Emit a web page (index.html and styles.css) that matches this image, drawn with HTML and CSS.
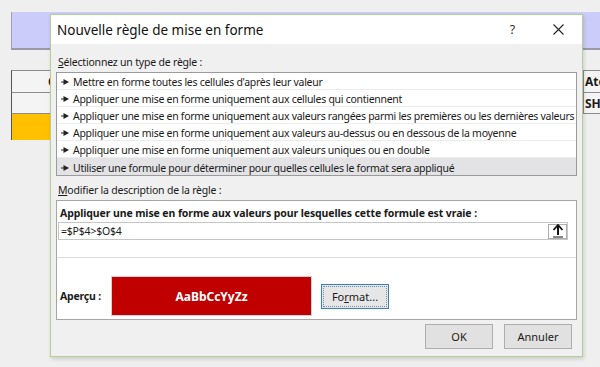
FILE: index.html
```html
<!DOCTYPE html>
<html lang="fr">
<head>
<meta charset="utf-8">
<title>Nouvelle règle de mise en forme</title>
<link rel="stylesheet" href="styles.css">
</head>
<body>
<div class="sheet">
  <div class="band"></div>
  <div class="grid">
    <div class="c edge"></div><div class="c hd">C</div><div class="c mid"></div><div class="c r">Ate</div>
    <div class="c edge"></div><div class="c"></div><div class="c mid"></div><div class="c r">SH:</div>
    <div class="c edge"></div><div class="c yellow"></div><div class="c mid"></div><div class="c blank"></div>
  </div>
</div>

<div class="dialog">
  <div class="titlebar">
    <span class="title">Nouvelle règle de mise en forme</span>
    <span class="help">?</span>
    <svg class="close" width="11" height="11" viewBox="0 0 11 11"><path d="M0.5 0.5 L10.5 10.5 M10.5 0.5 L0.5 10.5" stroke="#222" stroke-width="1.1" fill="none"/></svg>
  </div>
  <div class="body">
    <div class="label"><u>S</u>électionnez un type de règle :</div>
    <ul class="list">
      <li><svg class="arr" width="8" height="6" viewBox="0 0 8 6"><path d="M0 3 H3" stroke="#222" stroke-width="1"/><path d="M2.5 0 L8 3 L2.5 6 Z" fill="#222"/></svg>Mettre en forme toutes les cellules d'après leur valeur</li>
      <li><svg class="arr" width="8" height="6" viewBox="0 0 8 6"><path d="M0 3 H3" stroke="#222" stroke-width="1"/><path d="M2.5 0 L8 3 L2.5 6 Z" fill="#222"/></svg>Appliquer une mise en forme uniquement aux cellules qui contiennent</li>
      <li><svg class="arr" width="8" height="6" viewBox="0 0 8 6"><path d="M0 3 H3" stroke="#222" stroke-width="1"/><path d="M2.5 0 L8 3 L2.5 6 Z" fill="#222"/></svg>Appliquer une mise en forme uniquement aux valeurs rangées parmi les premières ou les dernières valeurs</li>
      <li><svg class="arr" width="8" height="6" viewBox="0 0 8 6"><path d="M0 3 H3" stroke="#222" stroke-width="1"/><path d="M2.5 0 L8 3 L2.5 6 Z" fill="#222"/></svg>Appliquer une mise en forme uniquement aux valeurs au-dessus ou en dessous de la moyenne</li>
      <li><svg class="arr" width="8" height="6" viewBox="0 0 8 6"><path d="M0 3 H3" stroke="#222" stroke-width="1"/><path d="M2.5 0 L8 3 L2.5 6 Z" fill="#222"/></svg>Appliquer une mise en forme uniquement aux valeurs uniques ou en double</li>
      <li class="sel"><svg class="arr" width="8" height="6" viewBox="0 0 8 6"><path d="M0 3 H3" stroke="#222" stroke-width="1"/><path d="M2.5 0 L8 3 L2.5 6 Z" fill="#222"/></svg>Utiliser une formule pour déterminer pour quelles cellules le format sera appliqué</li>
    </ul>
    <div class="label label2"><u>M</u>odifier la description de la règle :</div>
    <div class="desc">
      <div class="desc-title">Appliquer une mise en forme aux valeurs pour lesquelles cette formule est vraie :</div>
      <div class="input">
        <span class="formula">=$P$4&gt;$O$4</span>
        <span class="ref"><svg width="12" height="14" viewBox="0 0 12 14"><path d="M6 2 V11" stroke="#111" stroke-width="2"/><path d="M1.5 6 L6 1 L10.5 6" stroke="#111" stroke-width="1.8" fill="none"/><path d="M1 13 H11" stroke="#111" stroke-width="1"/></svg></span>
      </div>
      <div class="sep"></div>
      <div class="preview-row">
        <span class="apercu">Aperçu :</span>
        <div class="preview">AaBbCcYyZz</div>
        <button class="btn format">Fo<u>r</u>mat...</button>
      </div>
    </div>
    <div class="actions">
      <button class="btn">OK</button>
      <button class="btn">Annuler</button>
    </div>
  </div>
</div>
</body>
</html>
```

FILE: styles.css
```css
* { box-sizing: border-box; }
html, body { margin: 0; padding: 0; }
body {
  width: 600px;
  height: 367px;
  overflow: hidden;
  background: #efefef;
  font-family: "Noto Sans", "Open Sans", sans-serif;
  font-size: 10.5px;
  letter-spacing: -0.2px;
  color: #1a1a1a;
  position: relative;
}
.sheet { padding-top: 12px; }
.band {
  margin-left: 11px;
  height: 38px;
  background: #ccccfa;
  border-left: 1px solid #a0a0b0;
  border-bottom: 2px solid #9a9aa6;
}
.grid {
  margin-top: 20px;
  display: grid;
  grid-template-columns: 11px 39px 533px 17px;
  grid-template-rows: 22px 21px 27px;
}
.c {
  border-top: 1px solid #8c8c8c;
  background: #f4f4f4;
  font-weight: bold;
  font-size: 12px;
  letter-spacing: 0;
  display: flex;
  align-items: center;
  white-space: nowrap;
}
.edge { border-top: none; background: #efefef; }
.mid { background: #f4f4f4; }
.grid .c:nth-child(2), .grid .c:nth-child(6), .grid .c:nth-child(10) { border-left: 1px solid #555; }
.hd { padding-left: 36px; }
.r { border-left: 1px solid #8c8c8c; padding-left: 1px; overflow: hidden; }
.yellow { background: #ffc000; }
.blank { border-top: 1px solid #8c8c8c; background: #efefef; border-left: none; }

.dialog {
  position: absolute;
  left: 50px;
  top: 14px;
  width: 533px;
  height: 343px;
  background: #f0f0f0;
  border: 1px solid #b3cf91;
  box-shadow: 1px 2px 4px rgba(0,0,0,0.15);
}
.titlebar {
  height: 29px;
  background: #fff;
  display: flex;
  align-items: center;
  padding-left: 6px;
}
.title { font-size: 13.5px; letter-spacing: 0; color: #111; flex: 1; }
.help { font-size: 12.5px; color: #333; margin-right: 38px; }
.close { margin-right: 18px; }

.body { padding: 0 5px; }
.label { height: 16px; line-height: 16px; margin-top: 10px; margin-bottom: 2px; padding-left: 2px; }
.label2 { margin-top: 6px; }

.list {
  list-style: none;
  margin: 0;
  padding: 0;
  height: 104px;
  background: #fff;
  border: 1px solid #9b9b9b;
}
.list li {
  height: 17px;
  display: flex;
  align-items: center;
  border-bottom: 1px solid #ececec;
  white-space: nowrap;
  padding-left: 4px;
  padding-top: 2px;
  letter-spacing: -0.28px;
}
.list li:last-child { border-bottom: none; }
.list li.sel { background: #e3e3e6; }
.arr { margin-right: 4px; flex: none; }

.desc {
  height: 120px;
  background: #fff;
  border: 1px solid #a6a6a6;
}
.desc-title { font-weight: bold; font-size: 10.5px; letter-spacing: -0.1px; height: 16px; line-height: 16px; margin-top: 4px; padding-left: 3px; white-space: nowrap; }
.input {
  margin: 1px 8px 0 1px;
  height: 18px;
  border: 1px solid #c6c6c6;
  display: flex;
  align-items: center;
  padding-left: 2px;
}
.formula { flex: 1; }
.ref {
  width: 19px;
  height: 15px;
  border: 1px solid #adadad;
  display: flex;
  align-items: center;
  justify-content: center;
  background: #fff;
}
.sep { margin-top: 17px; border-top: 1px solid #dcdcdc; }
.preview-row {
  display: flex;
  align-items: center;
  margin-top: 18px;
  padding-left: 3px;
}
.apercu { font-weight: bold; width: 51px; }
.preview {
  width: 201px;
  height: 40px;
  background: #c00000;
  border: 1px solid #d0d0d0;
  color: #fff;
  font-weight: bold;
  font-size: 12px;
  letter-spacing: 0;
  display: flex;
  align-items: center;
  justify-content: center;
}
.btn {
  font-family: inherit;
  font-size: 11px;
  letter-spacing: 0;
  color: #1a1a1a;
  width: 68px;
  height: 25px;
  background: #e1e1e1;
  border: 1px solid #adadad;
  padding: 0;
}
.format {
  margin-left: 9px;
  border: 1px solid #3c7fb1;
  background: #e6e6e6;
  outline: 1px dotted #6a8fb0;
  outline-offset: -3px;
}
.actions {
  display: flex;
  justify-content: flex-end;
  gap: 11px;
  margin-top: 4px;
  padding-right: 5px;
}
```
